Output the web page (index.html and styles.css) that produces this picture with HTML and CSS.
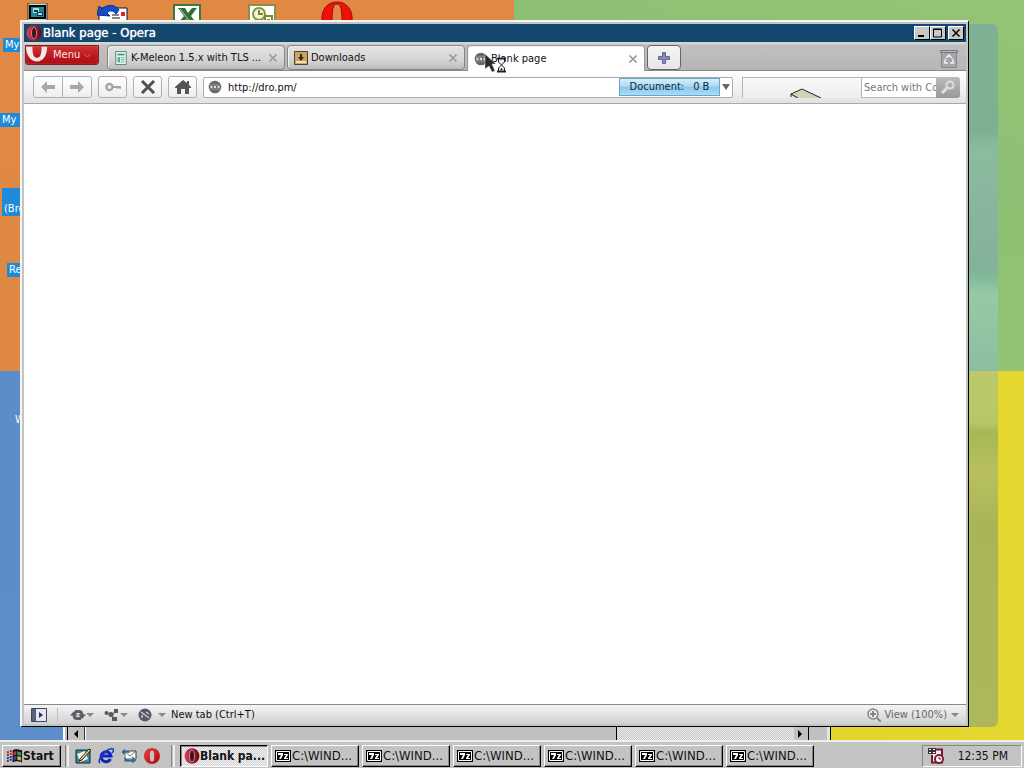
FILE: index.html
```html
<!DOCTYPE html>
<html lang="en">
<head>
    <meta charset="UTF-8">
    <meta name="viewport" content="width=device-width, initial-scale=1.0">
    <title>Blank page - Opera</title>
    <link rel="stylesheet" href="styles.css">
</head>
<body>
    <!-- shared icons -->
    <svg class="defs" aria-hidden="true">
        <defs>
            <linearGradient id="red" x1="0" y1="0" x2="1" y2="1">
                <stop offset="0" stop-color="#ff4030"/>
                <stop offset="1" stop-color="#b00010"/>
            </linearGradient>
            <linearGradient id="dark-red" x1="0" y1="0" x2="1" y2="0">
                <stop offset="0" stop-color="#e04050"/>
                <stop offset="1" stop-color="#6c0614"/>
            </linearGradient>
            <symbol id="opera" viewBox="0 0 16 16">
                <path fill="url(#red)" stroke="#a00010" stroke-width=".5" fill-rule="evenodd" d="M8 .5C3.400.5.5 3.500.5 8s2.900 7.500 7.500 7.500 7.500-3 7.500-7.500S12.600.5 8 .5zM8 2c1.800 0 2.600 2 2.600 6S9.800 14 8 14 5.400 12 5.400 8 6.200 2 8 2z"/>
            </symbol>
            <symbol id="opera-dark" viewBox="0 0 16 16">
                <ellipse cx="8" cy="8" rx="7.500" ry="7.800" fill="url(#dark-red)"/>
                <ellipse cx="8" cy="8" rx="2.500" ry="5.800" fill="#3a1420" stroke="#d8a0a8" stroke-width=".8"/>
            </symbol>
            <symbol id="close" viewBox="0 0 10 10">
                <path d="M1.500 1.500l7 7m0-7l-7 7" stroke="#999" stroke-width="1.700"/>
            </symbol>
            <symbol id="globe" viewBox="0 0 14 14">
                <circle cx="7" cy="7" r="6.300" fill="#686868"/>
                <path d="M1.500 5h11M1.500 9h11" stroke="#999" fill="none"/>
                <path d="M2.500 6h2v2h-2zM6 6h2v2H6zM9.500 6h2v2h-2z" fill="#e4e4e4"/>
            </symbol>
            <symbol id="dos" viewBox="0 0 16 12">
                <path d="M0 0h16v12H0z"/>
                <path d="M1.500 1.500h13v9h-13z" stroke="#fff" fill="#000"/>
                <path d="M3 3h5v2L6 9H4l2-4H3zM9 4h4v1l-2 3h2v1H9V8l2-3H9z" fill="#fff"/>
            </symbol>
        </defs>
    </svg>

    <main class="desktop">
        <div class="glass"></div>

        <svg class="shortcut computer" viewBox="0 0 22 20"><path fill="#d8d8c8" stroke="#333" d="M1 0h19v20H1z"/><path fill="#000" d="M2 2h17v14H2z"/><path fill="#178a98" d="M4 4h13v10H4z"/><path fill="#b8d8dc" d="M6 5h6v5H6z"/><path fill="#053c55" d="M7 7h4v2H7zM10 9h6v4h-6z"/><path fill="#b8d8dc" d="M11 10h4v2h-4z"/></svg>
        <svg class="shortcut mail" viewBox="0 0 32 20"><path fill="#fff" stroke="#112" d="M2 5h28v15H2z"/><path fill="#e31f2d" d="M24 9h4v4h-4z"/><path stroke="#111" d="M15 12h7M15 15h8"/><path fill="#164dcc" stroke="#072e8c" d="M0 12L2 3l3 3c5-5 13-5 17 1l-3 4c-3-4-7-4-9-1l3 3z"/></svg>
        <svg class="shortcut excel" viewBox="0 0 28 20"><path fill="#fff" stroke="#397b3d" stroke-width="2" d="M1 1h26v20H1z"/><path fill="#2e7038" d="M5 4h7l3 5 4-5h5l-6 8 6 8h-7l-4-5-4 5H4l7-8z"/><path stroke="#b7d5ae" d="M7 5l12 15"/></svg>
        <svg class="shortcut outlook" viewBox="0 0 28 20"><path fill="#fff" stroke="#839447" stroke-width="2" d="M1 1h26v20H1z"/><circle cx="11" cy="10" r="6" fill="#f5f5d0" stroke="#87953c" stroke-width="2"/><path d="M11 6v4h4M17 12h7v8h-7zm2 4h3" fill="none" stroke="#78873c" stroke-width="2"/></svg>
        <svg class="shortcut big-opera" viewBox="0 0 32 20"><path fill="#f01008" stroke="#901010" fill-rule="evenodd" d="M1 21C0 10 6 2 16 2s16 8 15 19zM11 21h10C21 10 20 4 16 4s-5 6-5 17z"/></svg>

        <span class="label l1">My</span>
        <span class="label l2">My D</span>
        <span class="label l3"><br>(Bro</span>
        <span class="label l4">Re</span>
        <span class="label plain l5">W</span>

        <!-- window hidden behind, only its scrollbar is visible -->
        <div class="back-window">
            <div class="scrollbar">
                <button class="arrow" aria-label="Scroll left"><svg viewBox="0 0 8 8"><path d="M6 0v8L2 4z"/></svg></button>
                <div class="thumb"></div>
                <div class="track"></div>
                <button class="arrow" aria-label="Scroll right"><svg viewBox="0 0 8 8"><path d="M2 0v8l4-4z"/></svg></button>
            </div>
        </div>

        <section class="window">
            <header class="titlebar">
                <svg class="icon16"><use href="#opera-dark"/></svg>
                <h1>Blank page - Opera</h1>
                <button class="win-button" aria-label="Minimize"><svg viewBox="0 0 12 10"><path d="M2 7h6v2H2z"/></svg></button>
                <button class="win-button" aria-label="Maximize"><svg viewBox="0 0 12 10"><path d="M1.500 1h8v8h-8zM1 1.500h9" fill="none" stroke="#000"/></svg></button>
                <button class="win-button last" aria-label="Close"><svg viewBox="0 0 12 10"><path d="M2.500 1.500l7 7m0-7l-7 7" stroke="#000" stroke-width="1.500"/></svg></button>
            </header>

            <nav class="tabbar">
                <button class="menu">
                    <svg class="menu-logo" viewBox="0 0 24 17"><path fill="#f4e8e8" d="M0 0h7c0 7 1 12 5 12s5-5 5-12h6c0 9-4 16-11 16S0 9 0 0z"/></svg>
                    <span>Menu</span>
                    <svg class="menu-arrow" viewBox="0 0 7 5"><path d="M.5 1l3 3 3-3" fill="none" stroke="#e06a6a"/></svg>
                </button>
                <div class="tab">
                    <svg class="icon14" viewBox="0 0 14 16"><path d="M1 .5h12v15H1z" fill="#e8f6ef" stroke="#477d70"/><path d="M3 3h8v2H3z" fill="#29a388"/><path d="M3 7h3v6H3z" fill="#47b398"/><path d="M7 7.500h4M7 10h4M7 12.500h4" stroke="#5aa893"/></svg>
                    <button class="tab-name">K-Meleon 1.5.x with TLS ...</button>
                    <button class="tab-close" aria-label="Close tab"><svg><use href="#close"/></svg></button>
                </div>
                <div class="tab">
                    <svg class="icon14" viewBox="0 0 14 14"><path d="M.5.5h13v13H.5z" fill="#c9a468" stroke="#5a4020"/><path d="M2 10h10v2H2z" fill="#f5dfad"/><path d="M6 3h2v3h2L7 10 4 6h2z" fill="#3b2810"/></svg>
                    <button class="tab-name">Downloads</button>
                    <button class="tab-close" aria-label="Close tab"><svg><use href="#close"/></svg></button>
                </div>
                <div class="tab active">
                    <svg class="icon14"><use href="#globe"/></svg>
                    <button class="tab-name">Blank page</button>
                    <button class="tab-close" aria-label="Close tab"><svg><use href="#close"/></svg></button>
                </div>
                <button class="new-tab" aria-label="New tab"><svg viewBox="0 0 12 12"><path d="M4.500.5h3v4h4v3h-4v4h-3v-4h-4v-3h4z" fill="#8589bb" stroke="#626590"/></svg></button>
                <button class="trash" aria-label="Closed tabs"><svg viewBox="0 0 18 20"><path d="M1.500 3.500h15v15h-15z" fill="#a4a6a9" stroke="#85878a"/><path d="M.5 1.500h17v2H.5z" fill="#b5b7ba" stroke="#77797c"/><path d="M6 9l3-3 3 3M12.500 10l1 4H10M8 14H4.500l1-4" fill="none" stroke="#eee" stroke-width="1.500"/></svg></button>
            </nav>

            <div class="toolbar">
                <div class="pair">
                    <button class="tool" aria-label="Back"><svg viewBox="0 0 16 12"><path d="M7 0v4h8v4H7v4L1 6z" fill="#a8a8a8"/></svg></button>
                    <button class="tool" aria-label="Forward"><svg viewBox="0 0 16 12"><path d="M9 0v4H1v4h8v4l6-6z" fill="#a8a8a8"/></svg></button>
                </div>
                <button class="tool" aria-label="Wand"><svg viewBox="0 0 18 12"><circle cx="5" cy="6" r="3.500" fill="#eee" stroke="#a2a2a2" stroke-width="2.500"/><path d="M8 6h9v2M14 6v2" fill="none" stroke="#a2a2a2" stroke-width="2"/></svg></button>
                <button class="tool" aria-label="Stop"><svg viewBox="0 0 16 14"><path d="M2 1l12 12m0-12L2 13" stroke="#505050" stroke-width="3"/></svg></button>
                <button class="tool" aria-label="Home"><svg viewBox="0 0 16 14"><path d="M8 0L0 7v1h2v6h4V9h4v5h4V8h2V7l-2-2V1h-2v2z" fill="#555"/></svg></button>
                <div class="address">
                    <svg class="icon14"><use href="#globe"/></svg>
                    <input type="text" aria-label="Address" value="http://dro.pm/">
                    <span class="progress"><span>Document:</span><span>0 B</span></span>
                    <button class="drop" aria-label="History"><svg viewBox="0 0 8 6"><path d="M0 0h8L4 6z"/></svg></button>
                </div>
                <div class="extension"><svg viewBox="0 0 32 10"><path d="M1 7l11-6 19 9H4z" fill="#d3d1b8"/><path d="M1 9V6l11-5 19 9M1 6l7 4" fill="none" stroke="#222"/></svg></div>
                <div class="search">
                    <input type="text" aria-label="Search" placeholder="Search with Comodo">
                    <button aria-label="Search"><svg viewBox="0 0 16 14"><circle cx="10" cy="5" r="3.500" fill="none" stroke="#ddd" stroke-width="2"/><path d="M7 8l-5 5" stroke="#ddd" stroke-width="3"/></svg></button>
                </div>
            </div>

            <div class="page"></div>

            <footer class="status">
                <button class="panel" aria-label="Panels"><svg viewBox="0 0 16 14"><path d="M.5.5h15v13H.5z" fill="#e4e7ef" stroke="#3c4661"/><path d="M1 1h4v12H1z" fill="#56617c"/><path d="M8 4v6l4-3z" fill="#2e3448"/></svg></button>
                <button class="status-tool" aria-label="Synchronize"><svg class="wide" viewBox="0 0 16 14"><path d="M5 3.500h4q3 0 3 4M11 10.500H7q-3 0-3-4" fill="none" stroke="#5b5f68" stroke-width="3"/><path d="M0 7.500h8L4 3zM8 6.500h8L12 11z" fill="#5b5f68"/></svg><svg class="tri" viewBox="0 0 8 4"><path d="M0 0h8L4 4z"/></svg></button>
                <button class="status-tool" aria-label="Unite"><svg class="wide" viewBox="0 0 16 14"><path d="M3 5l3 1M8 7l4-4M8 7l2 4" fill="none" stroke="#8a8d94" stroke-width="1.500"/><circle cx="2.500" cy="5" r="2" fill="#555a63"/><circle cx="7" cy="6.500" r="2.500" fill="#555a63"/><path d="M10 1h4v4h-4zM8 9h5v4H8z" fill="#555a63"/></svg><svg class="tri" viewBox="0 0 8 4"><path d="M0 0h8L4 4z"/></svg></button>
                <button class="status-tool spaced" aria-label="Turbo"><svg class="wide" viewBox="0 0 16 14"><circle cx="7" cy="7" r="6.500" fill="#555966"/><path d="M3 4l8 6M4 10V7M8 4l3 2" stroke="#c9ccd4" fill="none" stroke-width="1.500"/></svg><svg class="tri" viewBox="0 0 8 4"><path d="M0 0h8L4 4z"/></svg></button>
                <span class="hint">New tab (Ctrl+T)</span>
                <button class="view"><svg class="icon14" viewBox="0 0 14 14"><circle cx="6" cy="6" r="5" fill="#eee" stroke="#85868c" stroke-width="1.500"/><path d="M3 6h6M6 3v6M10 10l4 4" stroke="#85868c" stroke-width="2"/></svg>View (100%)<svg class="tri" viewBox="0 0 8 4"><path d="M0 0h8L4 4z"/></svg></button>
            </footer>
        </section>

        <svg class="cursor" viewBox="0 0 24 20"><path d="M1 0l11 10H8l3 7-3 1-3-6-4 3z" fill="#2b2b2b" stroke="#ddd" stroke-width=".5"/><path d="M13 4.500h9M13 17.500h9" stroke="#222" stroke-width="2"/><path d="M14.500 5v3l3 3-3 3v3h6v-3l-3-3 3-3V5z" fill="#eee" stroke="#222"/><path d="M16 16l1.500-2 1.500 2z" fill="#222"/></svg>
    </main>

    <footer class="taskbar">
        <button class="start"><svg viewBox="0 0 18 16"><path d="M7 2c3-2 5-1 10 0v13c-4-2-7-2-10 0z" fill="#111"/><path d="M8 4c1-1 2-1 3-1v4c-1 0-2 0-3 1z" fill="#c33"/><path d="M12 3l4 1v4l-4-1z" fill="#396"/><path d="M8 9c1-1 2-1 3-1v4c-1 0-2 0-3 1z" fill="#34a"/><path d="M12 8l4 1v4l-4-1z" fill="#bb5"/><path d="M1 4h2m1-1h2M1 7h2m1-1h2" stroke="#a23" stroke-width="2"/><path d="M1 10h2m1-1h2M1 13h2m1-1h2" stroke="#237" stroke-width="2"/></svg>Start</button>
        <span class="grip"></span>
        <div class="quick">
            <button aria-label="Show desktop"><svg viewBox="0 0 16 16"><path d="M1 2h14v13H1z" fill="#3889a8" stroke="#123"/><path d="M2 6l8-3 3 8-8 3z" fill="#f5f4dc"/><path d="M5 11L14 1l2 1-9 10-3 1z" fill="#eed575" stroke="#222"/></svg></button>
            <button aria-label="Internet Explorer"><svg viewBox="0 0 16 16"><path d="M12.500 11a5 5 0 1 1 .5-3H4" fill="none" stroke="#1022b8" stroke-width="3"/><path d="M2 15C-2 12 10-1 15 1c1 1 0 3-1 4" fill="none" stroke="#1a35c8" stroke-width="1.500"/></svg></button>
            <button aria-label="Outlook Express"><svg viewBox="0 0 16 16"><path d="M4 3h11v8H4z" fill="#fff" stroke="#334"/><path d="M4 4l5 4 5-4" fill="none" stroke="#777"/><path d="M0 4l4-4v2h5v3H4v3zM16 12l-5 4v-2H3V8l3 3h5V8z" fill="#2c68b5" stroke="#e9e97e" stroke-width=".5"/></svg></button>
            <button aria-label="Opera"><svg><use href="#opera"/></svg></button>
        </div>
        <span class="grip"></span>
        <div class="tasks">
            <button class="task pressed"><svg class="icon16"><use href="#opera-dark"/></svg>Blank pa...</button>
            <button class="task"><svg class="dos"><use href="#dos"/></svg>C:\WIND...</button>
            <button class="task"><svg class="dos"><use href="#dos"/></svg>C:\WIND...</button>
            <button class="task"><svg class="dos"><use href="#dos"/></svg>C:\WIND...</button>
            <button class="task"><svg class="dos"><use href="#dos"/></svg>C:\WIND...</button>
            <button class="task"><svg class="dos"><use href="#dos"/></svg>C:\WIND...</button>
            <button class="task"><svg class="dos"><use href="#dos"/></svg>C:\WIND...</button>
        </div>
        <div class="tray">
            <svg class="icon16" viewBox="0 0 16 16"><path d="M7 1.500h7v13H4V7" fill="#eee" stroke="#711b34" stroke-width="2"/><path d="M0 0h8v6H0z" fill="#333"/><path d="M1 1h2v1H1zm0 3h2v1H1zM5 1h2v1H5zm0 3h2v1H5z" fill="#fff"/><circle cx="11" cy="11" r="4" fill="#fff" stroke="#8b1633" stroke-width="2"/><path d="M11 9v2h2" fill="none" stroke="#222"/></svg>
            <time>12:35 PM</time>
        </div>
    </footer>
</body>
</html>
```
FILE: styles.css
```css
* {
    box-sizing: border-box;
}
body {
    margin: 0;
    height: 100vh;
    display: flex;
    flex-direction: column;
    overflow: hidden;
    font-family: "DejaVu Sans Condensed", "DejaVu Sans", sans-serif;
    font-size: 11px;
    line-height: 16px;
    color: #111;
}
button, input {
    font: inherit;
    color: inherit;
    margin: 0;
    padding: 0;
    border: 0;
    background: none;
    border-radius: 0;
}
svg {
    display: block;
    flex: none;
}
.defs {
    position: absolute;
    width: 0;
    height: 0;
}
.icon16 {
    width: 16px;
    height: 16px;
}
.icon14 {
    width: 14px;
    height: 14px;
}

/* desktop */
.desktop {
    flex: 1;
    position: relative;
    overflow: hidden;
    background:
        linear-gradient(#e08844, #df8844) 0 0 / 514px 371px no-repeat,
        linear-gradient(200deg, #9bc777, #8ec073 50%, #94c773) 514px 0 / 100% 371px no-repeat,
        linear-gradient(#5a8dc9, #5f8ecb) 0 371px / 514px 100% no-repeat,
        linear-gradient(90deg, #e3d431, #e5d92b) 514px 371px no-repeat;
}
.glass {
    position: absolute;
    top: 24px;
    right: 26px;
    bottom: 13px;
    width: 60px;
    border-radius: 6px;
    background: linear-gradient(#7fb093 0, #7fb093 108px, #8cbca0 124px, #84b19a 240px, #80b898 252px, #98c9a6 270px, #8cbda0 347px, #bcc86a 347px, #b9c866 398px, #a8b755 408px, #b8c05e 450px, #aab557 500px, #acb85a 100%);
}
.shortcut {
    position: absolute;
    height: 20px;
}
.computer { left: 27px; top: 3px; width: 22px; }
.mail { left: 97px; top: 3px; width: 32px; }
.excel { left: 173px; top: 4px; width: 28px; }
.outlook { left: 248px; top: 4px; width: 28px; }
.big-opera { left: 321px; top: 0; width: 32px; }
.label {
    position: absolute;
    width: 22px;
    padding: 0 2px;
    color: #fff;
    background: #1d8bd8;
    line-height: 14px;
    white-space: nowrap;
    overflow: hidden;
}
.label.plain { background: none; }
.l1 { left: 3px; top: 38px; }
.l2 { left: 0; top: 113px; }
.l3 { left: 2px; top: 188px; }
.l4 { left: 7px; top: 263px; }
.l5 { left: 13px; top: 413px; }

.back-window {
    position: absolute;
    left: 63px;
    right: 193px;
    bottom: 0;
    height: 40px;
    padding: 0 21px 0 2px;
    background: #c0c0c0;
    border-left: 2px solid #fff;
    border-right: 1px solid #000;
    box-shadow: inset -3px 0 0 #e4e4e4;
}
.scrollbar {
    display: flex;
    height: 40px;
    border-left: 1px solid #000;
    border-right: 1px solid #000;
}
.arrow {
    width: 17px;
    padding: 27px 4px 0;
    border-right: 1px solid #333;
}
.arrow:last-child {
    width: 14px;
    padding: 27px 2px 0;
    border: 0;
}
.arrow svg {
    width: 8px;
    height: 10px;
}
.thumb {
    flex: 3;
    border-left: 1px solid #fff;
    border-right: 1px solid #000;
}
.track {
    flex: 1;
    background: repeating-conic-gradient(#ececec 0 25%, #c6c6c6 0 50%) 0 0 / 2px 2px;
}

/* browser window */
.window {
    position: absolute;
    top: 20px;
    right: 55px;
    bottom: 13px;
    left: 20px;
    display: flex;
    flex-direction: column;
    border: 2px solid #f4f4f4;
    border-right: 1px solid #000;
    border-bottom: 1px solid #000;
    background: #fff;
    box-shadow: inset 0 0 0 2px #c4c4c4;
    padding: 2px;
}
.titlebar {
    display: flex;
    align-items: center;
    height: 18px;
    padding: 0 2px;
    background: #12476e;
    color: #fff;
}
.titlebar h1 {
    flex: 1;
    margin: 0 0 0 1px;
    font-size: 13px;
    font-weight: normal;
    text-shadow: 0 0 1px #fff;
}
.win-button {
    width: 16px;
    height: 14px;
    padding: 1px;
    background: #c8c8c8;
    border: 1px solid;
    border-color: #fff #000 #000 #fff;
}
.win-button svg {
    width: 12px;
    height: 10px;
}
.last {
    margin-left: 2px;
}

.tabbar {
    display: flex;
    height: 29px;
    padding: 3px 8px 0 1px;
    background: linear-gradient(#d4d4d4 2px, #c0c0c0 3px, #b6b6b6);
    border-bottom: 1px solid #888;
}
.menu {
    display: flex;
    align-items: center;
    width: 74px;
    height: 20px;
    margin-right: 8px;
    padding-right: 7px;
    color: #fbe6e6;
    background: linear-gradient(#cf3638, #bd1a20 50%, #ae0f16);
    border: 1px solid #7c2020;
    border-radius: 0 0 3px 3px;
    box-shadow: inset 0 0 1px #f99;
}
.menu-logo {
    width: 22px;
    height: 17px;
    align-self: flex-start;
    margin-right: 5px;
}
.menu-arrow {
    width: 7px;
    height: 5px;
    margin-left: auto;
}
.tab {
    flex: 0 1 178px;
    display: flex;
    align-items: center;
    min-width: 0;
    height: 25px;
    margin-right: 2px;
    padding: 0 6px;
    background: linear-gradient(#e3e3e3, #d5d5d5 60%, #bcbcbc);
    border: 1px solid #858585;
    border-radius: 4px;
    box-shadow: inset 1px 1px 0 #f1f1f1;
}
.tab.active {
    height: 26px;
    background: #fff;
    border-color: #999;
    border-bottom: 0;
    border-radius: 4px 4px 0 0;
}
.tab-name {
    flex: 1;
    min-width: 0;
    margin-left: 3px;
    overflow: hidden;
    text-align: left;
    white-space: nowrap;
}
.tab-close svg {
    width: 10px;
    height: 10px;
}
.new-tab {
    width: 34px;
    height: 25px;
    padding: 0 10px;
    background: linear-gradient(#f5f5f5, #e6e6e9);
    border: 1px solid #666;
    border-radius: 4px;
}
.new-tab svg {
    width: 12px;
    height: 12px;
}
.trash {
    margin-left: auto;
    padding-top: 2px;
}
.trash svg {
    width: 18px;
    height: 20px;
}

.toolbar {
    display: flex;
    align-items: center;
    gap: 6px;
    height: 33px;
    padding: 0 6px 0 9px;
    background: linear-gradient(#fff, #f3f3f3 50%, #e2e2e2);
    border-bottom: 1px solid #a8a8a8;
}
.tool {
    display: flex;
    align-items: center;
    justify-content: center;
    width: 29px;
    height: 22px;
    background: linear-gradient(#fff, #eee);
    border: 1px solid #b0b0b0;
    border-radius: 3px;
}
.tool svg {
    width: 16px;
    height: 14px;
}
.pair {
    display: flex;
    width: 59px;
}
.pair .tool {
    width: 30px;
    border-radius: 3px 0 0 3px;
}
.pair .tool + .tool {
    margin-left: -1px;
    border-radius: 0 3px 3px 0;
}
.address {
    flex: 1;
    display: flex;
    align-items: center;
    height: 21px;
    padding: 0 2px 0 4px;
    background: #fff;
    border: 1px solid #aaa;
    border-radius: 2px;
}
.address input {
    flex: 1;
    min-width: 0;
    margin-left: 6px;
    padding-top: 2px;
}
.progress {
    display: flex;
    justify-content: center;
    gap: 9px;
    width: 101px;
    height: 18px;
    background: linear-gradient(#d5effc, #aedaf3 45%, #8cc8ec 50%, #a6ddf8);
    border: 1px solid #6ba4ca;
    color: #0c2940;
}
.drop {
    padding: 0 0 0 2px;
}
.drop svg {
    width: 8px;
    height: 6px;
    fill: #667;
}
.extension {
    display: flex;
    align-items: flex-end;
    justify-content: center;
    width: 119px;
    height: 21px;
    margin: 0 -6px 0 3px;
    padding-left: 8px;
    border: 1px solid #b5b5b5;
    border-width: 1px 0 0 1px;
    background: linear-gradient(#f9f9f9, #eee);
}
.extension svg {
    width: 32px;
    height: 10px;
}
.search {
    display: flex;
    width: 99px;
    height: 21px;
}
.search input {
    width: 75px;
    padding: 2px 0 0 2px;
    background: #fff;
    border: 1px solid #b5b5b5;
    border-right: 0;
}
.search input::placeholder {
    color: #777;
    opacity: 1;
}
.search button {
    width: 24px;
    padding: 0 4px;
    background: linear-gradient(#bbb, #999);
    border-radius: 0 3px 3px 0;
}
.search svg {
    width: 16px;
    height: 14px;
}
.page {
    flex: 1;
    background: #fff;
}

.status {
    display: flex;
    align-items: center;
    height: 20px;
    padding: 0 7px;
    background: linear-gradient(#f4f4f4, #d2d2d2);
    border-top: 1px solid #888;
}
.panel {
    margin-right: 12px;
    padding-right: 10px;
    border-right: 1px solid #c0c0c0;
}
.panel svg, .wide {
    width: 16px;
    height: 14px;
}
.status-tool {
    display: flex;
    align-items: center;
    width: 24px;
    margin-right: 10px;
}
.spaced {
    width: 28px;
    justify-content: space-between;
    margin-right: 5px;
}
.tri {
    width: 8px;
    height: 4px;
    fill: #888;
}
.view {
    display: flex;
    align-items: center;
    gap: 3px;
    margin-left: auto;
    color: #666;
}
.view .tri {
    margin-left: 1px;
}

.cursor {
    position: absolute;
    left: 484px;
    top: 54px;
    width: 24px;
    height: 20px;
}

/* taskbar */
.taskbar {
    display: flex;
    align-items: center;
    height: 28px;
    padding: 2px 2px 0;
    background: #c3c3c3;
    border-top: 2px solid #eee;
}
.start, .task {
    display: flex;
    align-items: center;
    height: 22px;
    border: 1px solid;
    border-color: #fff #000 #000 #fff;
    box-shadow: inset -1px -1px 0 #858585;
    white-space: nowrap;
}
.start {
    width: 59px;
    padding-left: 3px;
    font-size: 12px;
    font-weight: bold;
}
.start svg {
    width: 17px;
    height: 16px;
}
.grip {
    width: 4px;
    height: 22px;
    margin: 0 5px 0 4px;
    border-left: 1px solid #888;
    border-right: 2px solid #eee;
}
.quick {
    display: flex;
    gap: 7px;
    width: 93px;
    padding-left: 1px;
}
.quick svg {
    width: 16px;
    height: 16px;
}
.tasks {
    flex: 1;
    display: flex;
    gap: 3px;
    min-width: 0;
}
.task {
    flex: 0 1 88px;
    padding-left: 3px;
    overflow: hidden;
    font-size: 13px;
}
.dos {
    width: 16px;
    height: 12px;
    margin-right: 1px;
}
.pressed {
    font-size: 12px;
    font-weight: bold;
    border-color: #000 #fff #fff #000;
    box-shadow: inset 1px 1px 0 #858585;
    background: repeating-conic-gradient(#f4f4f4 0 25%, #cfcfcf 0 50%) 0 0 / 2px 2px;
}
.tray {
    display: flex;
    align-items: center;
    gap: 14px;
    height: 22px;
    padding: 0 13px 0 5px;
    border: 1px solid;
    border-color: #858585 #fff #fff #858585;
    font-size: 12px;
}
```
